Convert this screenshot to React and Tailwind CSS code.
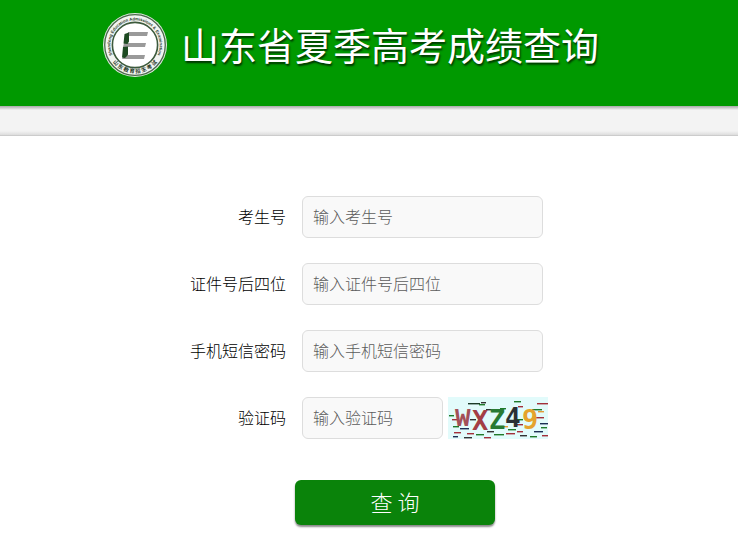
import React, { useState } from 'react';

const fields = [
  { id: 'examNumber', label: '考生号', placeholder: '输入考生号' },
  { id: 'idLastFour', label: '证件号后四位', placeholder: '输入证件号后四位' },
  { id: 'smsPassword', label: '手机短信密码', placeholder: '输入手机短信密码' },
];

const labelClass = 'pb-[2px] text-right text-base font-light text-black';

const inputClass =
  'h-[42px] rounded-md border border-[#dddddd] bg-[#f9f9f9] px-[10px] pb-[2px] text-base font-light text-[#333333] placeholder:text-[#5c5c5c] focus:outline-none focus:border-[#0a830a]';

const Seal = () => (
  <svg className="h-16 w-16 shrink-0" viewBox="0 0 64 64" role="img" aria-label="山东教育招生考试">
    <defs>
      <path id="sealTop" d="M11.6 45.7 A24.6 24.6 0 1 1 52.4 45.7" />
      <path id="sealBottom" d="M5 40 A28.2 28.2 0 0 0 59 40" />
    </defs>
    <circle cx="32" cy="32" r="32" fill="#dfeadf" />
    <circle cx="32" cy="32" r="30.3" fill="#f1f4f1" stroke="#4c694c" strokeWidth="1.3" />
    <circle cx="32" cy="32" r="22.6" fill="#fff" stroke="#3c5a3c" strokeWidth="1.6" />
    <text fill="#1f381f" fontSize="4.2" fontWeight="700" fontFamily="Liberation Sans, sans-serif">
      <textPath href="#sealTop" startOffset="50%" textAnchor="middle">
        Shandong Education Admissions &amp; Examination
      </textPath>
    </text>
    <text fill="#1f381f" fontSize="5.3" fontWeight="700" fontFamily="Noto Sans CJK SC, sans-serif">
      <textPath href="#sealBottom" startOffset="50%" textAnchor="middle">
        山 东 教 育 招 生 考 试
      </textPath>
    </text>
    <path fill="#9a9a9a" d="M25 19h20l-1 4H24zM21 30h22l-1 4H20zM21 42h21l-1 4H19z" />
    <path fill="#1d4a22" d="M21.5 21l4.500-1.500v9l-1.500 2.500-4-.5zM20 34l5-.5v8l-1 1.500-2 2-3-.5z" />
  </svg>
);

// [x, y, width, colour] of every dash behind the code
const dashes = [
  [20, 6, 12, '#1c3a28'], [33, 5, 5, '#333333'], [66, 4, 7, '#1f7a2a'], [89, 6, 11, '#a3303a'],
  [52, 11, 6, '#1f7a2a'], [70, 9, 5, '#a3303a'], [84, 12, 10, '#1f7a2a'], [38, 12, 8, '#333333'],
  [31, 7, 6, '#1f7a2a'], [90, 14, 6, '#e39b35'], [1, 18, 5, '#1f7a2a'], [87, 20, 9, '#a3303a'],
  [4, 22, 6, '#a3303a'], [22, 22, 6, '#333333'], [92, 26, 8, '#1c2f55'], [68, 22, 7, '#1f7a2a'],
  [12, 31, 9, '#1c2f55'], [69, 27, 6, '#a3303a'], [93, 30, 6, '#1f7a2a'], [53, 29, 7, '#e39b35'],
  [5, 29, 6, '#1f7a2a'], [19, 36, 7, '#a3303a'], [39, 34, 7, '#333333'], [60, 32, 8, '#1f7a2a'],
  [69, 34, 6, '#a3303a'], [86, 34, 9, '#1c2f55'], [6, 35, 7, '#a3303a'], [28, 37, 8, '#1f7a2a'],
  [46, 37, 10, '#1f7a2a'], [72, 38, 7, '#333333'], [82, 39, 7, '#1f7a2a'], [94, 38, 6, '#a3303a'],
  [5, 39, 5, '#1c2f55'], [58, 36, 9, '#a3303a'], [16, 40, 8, '#333333'], [36, 40, 7, '#a3303a'],
];

const Captcha = () => (
  <svg className="block h-[42px] w-[100px] shrink-0" viewBox="0 0 100 42">
    <rect width="100" height="42" fill="#e2fbfb" />
    {dashes.map(([x, y, width, color]) => (
      <rect key={`${x}-${y}`} x={x} y={y} width={width} height="1.4" fill={color} />
    ))}
    <g fontFamily="DejaVu Sans Mono, monospace" fontWeight="700" fontSize="27">
      <text x="7" y="29" fontSize="26" fill="#a35058" fontFamily="Liberation Mono, monospace">W</text>
      <text x="24" y="33" fill="#a33e45">X</text>
      <text x="41" y="32" fill="#277a32">Z</text>
      <text x="57" y="30" fontSize="26" fill="#2b3034">4</text>
      <text x="74" y="32" fill="#e5a32c">9</text>
    </g>
  </svg>
);

const App = () => {
  const [values, setValues] = useState({ examNumber: '', idLastFour: '', smsPassword: '', captcha: '' });

  const handleChange = (e) => {
    setValues({ ...values, [e.target.name]: e.target.value });
  };

  return (
    <div className="min-h-screen bg-white font-['Noto_Sans_CJK_SC',sans-serif]">
      <header className="bg-[#009900] pt-3 pb-[29px]">
        <div className="mx-auto flex w-[532px] max-w-full items-center gap-[14px]">
          <Seal />
          <h1 className="pb-[2px] text-[38px] leading-[63px] whitespace-nowrap text-white [text-shadow:1px_2px_2px_#003300]">
            山东省夏季高考成绩查询
          </h1>
        </div>
      </header>
      <div className="flex h-[30px] flex-col justify-between border-b border-[#cccccc] bg-[#f3f3f3]">
        <div className="h-1 bg-linear-to-b from-[#a8a8a8] to-[#f3f3f3]" />
        <div className="h-1 bg-linear-to-t from-[#dddddd] to-[#f3f3f3]" />
      </div>

      <main className="mx-auto w-[640px] max-w-full pt-[60px] pb-4">
        <form onSubmit={(e) => e.preventDefault()}>
          <div className="flex flex-col gap-[25px]">
            {fields.map(({ id, label, placeholder }) => (
              <div key={id} className="grid grid-cols-[237px_1fr] items-center gap-4">
                <label htmlFor={id} className={labelClass}>{label}</label>
                <input
                  id={id}
                  name={id}
                  type="text"
                  value={values[id]}
                  onChange={handleChange}
                  placeholder={placeholder}
                  className={`w-[241px] ${inputClass}`}
                />
              </div>
            ))}
            <div className="grid grid-cols-[237px_1fr] items-center gap-4">
              <label htmlFor="captcha" className={labelClass}>验证码</label>
              <div className="flex items-center gap-[5px]">
                <input
                  id="captcha"
                  name="captcha"
                  type="text"
                  value={values.captcha}
                  onChange={handleChange}
                  placeholder="输入验证码"
                  className={`w-[141px] ${inputClass}`}
                />
                <button type="button" aria-label="换一张验证码">
                  <Captcha />
                </button>
              </div>
            </div>
          </div>
          <button
            type="submit"
            className="mt-[41px] ml-[246px] h-[45px] w-[200px] rounded-md bg-[#0a830a] pb-[2px] text-[22px] font-light text-white shadow-[0_2px_2px_#888888]"
          >
            查 询
          </button>
        </form>
      </main>
    </div>
  );
};

export default App;
